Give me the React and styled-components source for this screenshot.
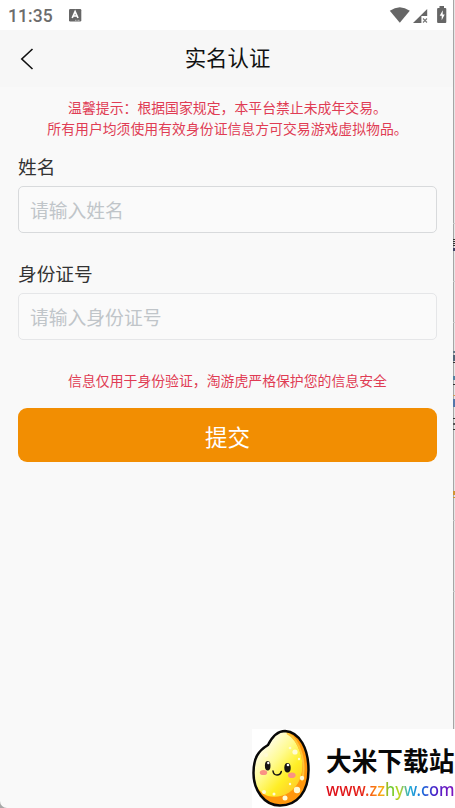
import React, { useState } from 'react';
import styled, { createGlobalStyle } from 'styled-components';

const GlobalStyle = createGlobalStyle`
  * {
    box-sizing: border-box;
  }
  body {
    margin: 0;
    background: #ececec;
    font-family: "Noto Sans CJK SC", sans-serif;
  }
`;

const Screen = styled.div`
  position: relative;
  display: flex;
  height: 808px;
  overflow: hidden;
  background: linear-gradient(90deg, #a8a8a8 50%, #e6e6e6 50%);
`;

const Phone = styled.main`
  flex: 1;
  margin-right: 1px;
  background: #f9f9f9;
  border-right: 1px solid #a6a6a6;
  border-bottom-left-radius: 7px;
`;

const StatusBar = styled.div`
  display: flex;
  align-items: center;
  height: 30px;
  padding: 0 6px 0 8px;
  background: #fff;
`;

const Clock = styled.span`
  width: 61px;
  color: #6c6c6c;
  font: 500 17.5px/32px Roboto, sans-serif;
  letter-spacing: 0.1px;
  padding-top: 1px;
`;

const StatusIcons = styled.div`
  display: flex;
  margin-left: auto;
  height: 30px;
`;

const Header = styled.header`
  display: grid;
  grid-template-columns: 54px 1fr 54px;
  align-items: center;
  height: 57px;
  background: #f7f7f7;
`;

const BackButton = styled.button`
  display: flex;
  padding: 0 0 0 20px;
  border: 0;
  background: none;
`;

const Title = styled.h1`
  margin: 0;
  color: #111;
  font-size: 21.4px;
  font-weight: 400;
  line-height: 30px;
  text-align: center;
  padding: 0 0 3px 2px;
`;

const Form = styled.form`
  display: flex;
  flex-direction: column;
  padding: 10px 16px 0 18px;
`;

const Notice = styled.p`
  margin: 0;
  color: #e03c54;
  font-size: 13.87px;
  line-height: 21px;
  text-align: center;
`;

const Field = styled.label`
  display: flex;
  flex-direction: column;
  margin-top: ${(props) => props.$top}px;
  color: #333;
  font-size: 18.7px;
  line-height: 28px;
`;

const Input = styled.input`
  width: 100%;
  height: 47px;
  margin-top: 6px;
  padding: 0 12px 0 11px;
  border: 1px solid ${(props) => props.$line};
  border-radius: 5px;
  outline: none;
  background: #fafafa;
  color: #333;
  font: 400 18.8px "Noto Sans CJK SC", sans-serif;
  &::placeholder {
    color: #c0c5c9;
    opacity: 1;
  }
`;

const SafeNotice = styled(Notice)`
  margin-top: 30px;
`;

const Submit = styled.button`
  height: 54px;
  margin-top: 17px;
  padding: 3px 0 0;
  border: 0;
  border-radius: 9px;
  background: #f28e02;
  color: #fff;
  font: 400 22.5px/51px "Noto Sans CJK SC", sans-serif;
`;

const Watermark = styled.div`
  position: absolute;
  right: 0;
  bottom: 0;
  display: flex;
  width: 203px;
  height: 79px;
  background: #fff;
  svg {
    flex-shrink: 0;
  }
`;

const SiteText = styled.div`
  width: 139px;
  padding: 12px 0 0 10px;
  white-space: nowrap;
`;

const SiteName = styled.div`
  color: #080808;
  font-size: 25.7px;
  font-weight: 600;
  line-height: 38px;
`;

const SiteUrl = styled.div`
  width: max-content;
  margin-top: -2px;
  font: 500 18.5px/24px "Noto Sans", sans-serif;
  transform: scaleX(0.885);
  transform-origin: left;
  color: transparent;
  background: linear-gradient(90deg, #dc0c18 0%, #e52018 28%, #f86a13 36%, #ffac10 44%, #5ac832 50%, #c5d51c 57%, #22aed5 65%, #1675dd 74%, #4b20c8 85%, #8014bd 100%);
  background-clip: text;
`;

const EdgeMark = styled.i`
  position: absolute;
  right: 0;
  top: ${(props) => props.$y}px;
  width: 2px;
  height: ${(props) => props.$h}px;
  background: ${(props) => props.$color};
`;

// slivers of the page behind the phone window
const EDGE_MARKS = [
  [223, 1, '#cbcbcb'],
  [239, 1, '#333'],
  [241, 1, '#333'],
  [243, 1, '#333'],
  [245, 1, '#333'],
  [248, 3, '#414164'],
  [281, 1, '#cbcbcb'],
  [322, 1, '#cbcbcb'],
  [351, 2, '#657885'],
  [355, 6, '#536578'],
  [362, 1, '#333'],
  [376, 4, '#5481a0'],
  [384, 1, '#333'],
  [395, 1, '#ce9c5c'],
  [399, 8, '#5377aa'],
  [418, 1, '#333'],
  [423, 2, '#555'],
  [429, 1, '#333'],
  [491, 4, '#d09535'],
  [497, 1, '#d09535'],
  [520, 1, '#cbcbcb'],
  [591, 1, '#cbcbcb'],
];

const KeyboardIcon = () => (
  <svg width="13" height="14" viewBox="0 0 13 14">
    <rect x="0" y="1" width="12.3" height="12.4" rx="1.2" fill="#666" />
    <path d="M3.2 10 6.1 3.6 9 10M4.2 8h3.9" fill="none" stroke="#fff" strokeWidth="1.7" />
    <path d="M6 12.3h5" stroke="#ccc" strokeWidth=".8" strokeDasharray="1 .5" />
  </svg>
);

const SignalIcons = () => (
  <svg width="59" height="30" viewBox="388 0 59 30">
    <path d="M389.8 10.8Q399.8 3.7 409.8 10.8L399.8 22.8Z" fill="#666" />
    <path d="M413 23 427.2 9v7h-5.8v7Z" fill="#666" />
    <path d="m423 18.5 4 4m0-4-4 4" stroke="#777" strokeWidth="1.1" />
    <path d="M439.5 6h4.5v2h1.3q1 0 1 1v13q0 1-1 1h-7.2q-1 0-1-1V9q0-1 1-1h1.4Z" fill="#666" />
    <path d="m442.8 10.3-3.1 5.4h2v4.5l3-5.8h-2Z" fill="#fff" />
  </svg>
);

const RiceLogo = () => (
  <svg width="64" height="79" viewBox="252 729 64 79">
    <defs>
      <linearGradient id="rice" x1="0" y1="0" x2=".85" y2="1">
        <stop offset=".25" stopColor="#fffde9" />
        <stop offset=".5" stopColor="#fffb91" />
        <stop offset=".74" stopColor="#ffee25" />
        <stop offset="1" stopColor="#ffc52a" />
      </linearGradient>
      <clipPath id="grain">
        <path d="M268 745C273 735 278 731 285 731C300 732 308.5 749 308.5 770C308.5 792 297 805.5 280 805.5C264 805.5 253.5 790 253.5 773C253.5 758 258 751 268 745Z" />
      </clipPath>
    </defs>
    <g clipPath="url(#grain)">
      <path fill="#ff970d" d="M252 729h60v79h-60Z" />
      <path fill="url(#rice)" d="M252 729h30C301 741 306 764 300 779C294 794 279 799 268 796C259 793 254 783 252 776Z" />
      <path d="M287 733C302 741 306 765 302 781" fill="none" stroke="#ffc537" strokeWidth="2" />
      <g fill="#fffbd5">
        <circle cx="295" cy="752" r="2.6" />
        <circle cx="290" cy="748" r="1.3" />
        <circle cx="299" cy="759" r="1.2" />
        <circle cx="302" cy="778" r="2.2" />
        <circle cx="297" cy="790" r="3.2" />
        <circle cx="285" cy="798" r="2.5" />
        <circle cx="290" cy="784" r="1.2" />
        <circle cx="264" cy="792" r="2" />
        <circle cx="274" cy="794" r="1.5" />
        <circle cx="266" cy="755" r="2" />
      </g>
    </g>
    <path d="M268 745C273 735 278 731 285 731C300 732 308.5 749 308.5 770C308.5 792 297 805.5 280 805.5C264 805.5 253.5 790 253.5 773C253.5 758 258 751 268 745Z" fill="none" stroke="#080808" strokeWidth="2.5" />
    <ellipse cx="263.5" cy="772.5" rx="3.7" ry="2.6" fill="#fa9284" />
    <ellipse cx="291.8" cy="775.2" rx="3.8" ry="2.8" fill="#fa9284" />
    <ellipse cx="267.7" cy="765.7" rx="2.8" ry="4.7" fill="#161311" />
    <ellipse cx="287.5" cy="767.8" rx="3.2" ry="4.8" fill="#161311" />
    <circle cx="268.3" cy="763" r="1.2" fill="#fff" />
    <circle cx="288" cy="765" r="1.3" fill="#fff" />
    <path d="M273 771Q273.5 775 277 775Q280.5 775 281.3 771.5" fill="none" stroke="#161311" strokeWidth="1.5" strokeLinecap="round" />
  </svg>
);

const App = () => {
  const [name, setName] = useState('');
  const [idNumber, setIdNumber] = useState('');

  const handleSubmit = (e) => {
    e.preventDefault();
  };

  return (
    <Screen>
      <GlobalStyle />
      <Phone>
        <StatusBar>
          <Clock>11:35</Clock>
          <KeyboardIcon />
          <StatusIcons>
            <SignalIcons />
          </StatusIcons>
        </StatusBar>
        <Header>
          <BackButton type="button" aria-label="返回">
            <svg width="14" height="22" viewBox="0 0 14 22">
              <path d="M12.5 1 1.8 11 12.5 21" fill="none" stroke="#111" strokeWidth="1.6" />
            </svg>
          </BackButton>
          <Title>实名认证</Title>
        </Header>
        <Form onSubmit={handleSubmit}>
          <Notice>
            温馨提示：根据国家规定，本平台禁止未成年交易。
            <br />
            所有用户均须使用有效身份证信息方可交易游戏虚拟物品。
          </Notice>
          <Field $top={13}>
            姓名
            <Input
              type="text"
              $line="#d8dadc"
              placeholder="请输入姓名"
              value={name}
              onChange={(e) => setName(e.target.value)}
            />
          </Field>
          <Field $top={26}>
            身份证号
            <Input
              type="text"
              $line="#e5e6e8"
              placeholder="请输入身份证号"
              value={idNumber}
              onChange={(e) => setIdNumber(e.target.value)}
            />
          </Field>
          <SafeNotice>信息仅用于身份验证，淘游虎严格保护您的信息安全</SafeNotice>
          <Submit type="submit">提交</Submit>
        </Form>
      </Phone>
      {EDGE_MARKS.map(([y, h, color]) => (
        <EdgeMark key={y} $y={y} $h={h} $color={color} />
      ))}
      <Watermark>
        <RiceLogo />
        <SiteText>
          <SiteName>大米下载站</SiteName>
          <SiteUrl>www.zzhyw.com</SiteUrl>
        </SiteText>
      </Watermark>
    </Screen>
  );
};

export default App;
